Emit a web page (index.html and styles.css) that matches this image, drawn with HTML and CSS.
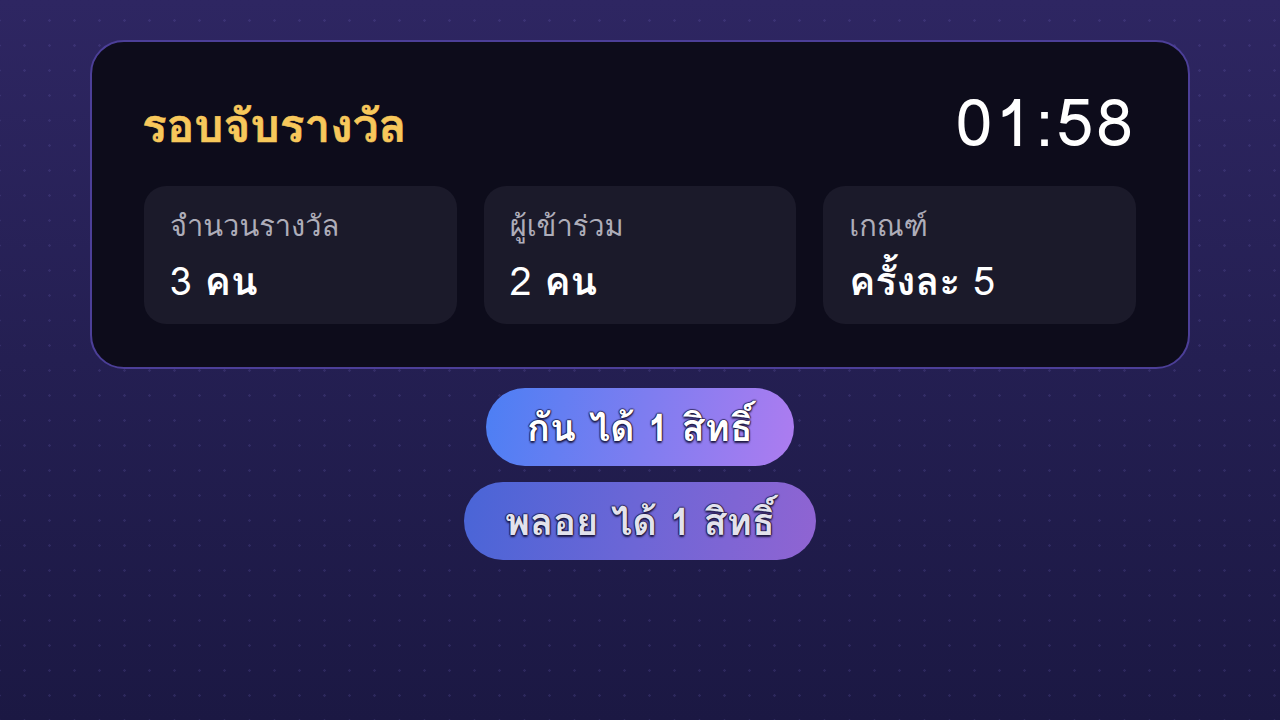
FILE: index.html
```html
<!DOCTYPE html>
<html lang="th">

<head>
    <meta charset="UTF-8">
    <meta name="viewport" content="width=device-width, initial-scale=1.0">
    <title>รอบจับรางวัล</title>
    <link rel="stylesheet" href="styles.css">
</head>

<body>
    <main class="stage">
        <section class="round-card">
            <div class="round-head">
                <h1 class="round-title">รอบจับรางวัล</h1>
                <div class="timer">01:58</div>
            </div>
            <div class="stats">
                <div class="stat">
                    <div class="stat-label">จำนวนรางวัล</div>
                    <div class="stat-value">3 <b>คน</b></div>
                </div>
                <div class="stat">
                    <div class="stat-label">ผู้เข้าร่วม</div>
                    <div class="stat-value">2 <b>คน</b></div>
                </div>
                <div class="stat">
                    <div class="stat-label">เกณฑ์</div>
                    <div class="stat-value"><b>ครั้งละ</b> 5</div>
                </div>
            </div>
        </section>

        <div class="winners">
            <div class="pill pill-first">กัน ได้ 1 สิทธิ์</div>
            <div class="pill pill-second">พลอย ได้ 1 สิทธิ์</div>
        </div>
    </main>
</body>

</html>
```

FILE: styles.css
```css
html, body {
    height: 100%;
}

body {
    margin: 0;
    font-family: 'Loma', 'Noto Sans Thai', 'Noto Sans', sans-serif;
    color: #fff;
    background-color: #221d4e;
    background-image:
        radial-gradient(circle, rgba(120, 110, 200, 0.18) 1px, transparent 1.5px),
        linear-gradient(to bottom, #2e2662 0%, #241f52 50%, #1b1843 100%);
    background-size: 25px 25px, 100% 100%;
    background-position: 12px 8px, 0 0;
}

.stage {
    display: flex;
    flex-direction: column;
    align-items: center;
    padding-top: 40px;
}

.round-card {
    width: 1100px;
    box-sizing: border-box;
    padding: 44px 52px 43px 52px;
    background: #0d0c1b;
    border: 2px solid #4c3f98;
    border-radius: 34px;
}

.round-head {
    display: flex;
    justify-content: space-between;
    align-items: center;
    height: 80px;
    margin-bottom: 20px;
}

.round-title {
    margin: 0 0 0 -2px;
    font-size: 46px;
    font-weight: 700;
    line-height: 80px;
    color: #f7c85b;
    -webkit-text-stroke: 0.6px #f7c85b;
}

.timer {
    font-size: 66px;
    font-weight: 400;
    line-height: 80px;
    letter-spacing: 3px;
    margin-top: -6px;
    color: #fff;
}

.stats {
    display: grid;
    grid-template-columns: repeat(3, 1fr);
    gap: 27px;
}

.stat {
    height: 138px;
    box-sizing: border-box;
    padding: 20px 26px;
    background: #1b1a2a;
    border-radius: 22px;
}

.stat-label {
    font-size: 29px;
    color: #aeadb9;
    line-height: 40px;
}

.stat-value {
    margin-top: 12px;
    font-size: 39px;
    line-height: 46px;
    color: #fff;
}

.stat-value b {
    font-weight: 700;
}

.winners {
    display: flex;
    flex-direction: column;
    align-items: center;
    gap: 16px;
    margin-top: 19px;
}

.pill {
    height: 78px;
    box-sizing: border-box;
    padding: 0 41px;
    display: flex;
    align-items: center;
    border-radius: 39px;
    font-size: 38px;
    font-weight: 700;
    text-shadow:
        0 2px 2px rgba(20, 15, 50, 0.9),
        1px 0 1px rgba(20, 15, 50, 0.8),
        -1px 0 1px rgba(20, 15, 50, 0.8),
        0 -1px 1px rgba(20, 15, 50, 0.6);
}

.pill-first {
    background: linear-gradient(100deg, #4c7ff4 0%, #7d7df0 50%, #ad7cf0 100%);
    color: #fff;
}

.pill-second {
    background: linear-gradient(100deg, #4965d7 0%, #6d66d6 50%, #9064d2 100%);
    color: #e2e2ec;
}
```
